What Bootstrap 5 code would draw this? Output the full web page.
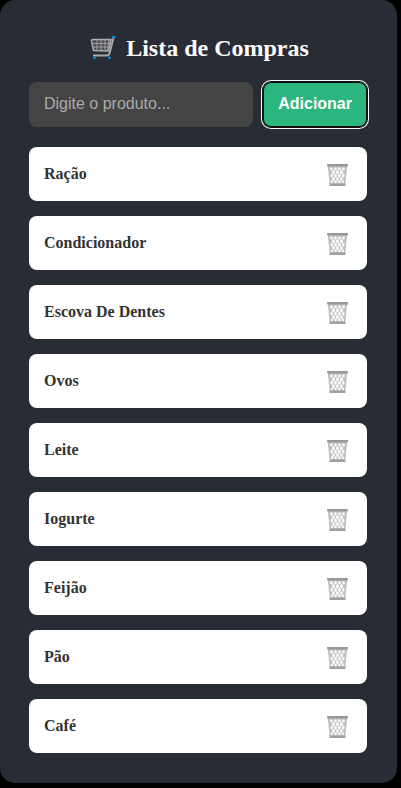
<!DOCTYPE html>
<html lang="pt-BR">
<head>
<meta charset="utf-8">
<meta name="viewport" content="width=device-width, initial-scale=1">
<title>Lista de Compras</title>
<link href="https://cdn.jsdelivr.net/npm/bootstrap@5.3.0/dist/css/bootstrap.min.css" rel="stylesheet">
<style>
body { background: #000; font-family: "Liberation Serif", "Times New Roman", serif; }
.shop-panel { background: #282c35; border-radius: 15px; margin: 0 4px 5px 0; padding: 29px 30px 30px 29px; }
.shop-title { font-size: 24px; line-height: 38px; color: #fff; gap: 10px; padding-left: 3px; }
.shop-form { gap: 10px; margin-top: 15px; }
.shop-input, .shop-add { height: 45px; border-radius: 8px; font-family: "Liberation Sans", Arial, sans-serif; font-size: 16px; }
.shop-input, .shop-input:focus { background: #444; color: #fff; padding: 0 15px 2px; }
.shop-input::placeholder { color: #aaa; }
.shop-add, .shop-add:hover { background: #2cb67d; color: #fff; padding: 0 15px 2px; box-shadow: inset 0 0 0 1px #101010, 0 0 0 1px #101010, 0 0 0 2px #fff; }
.shop-items { gap: 15px; margin-top: 20px; }
.shop-item { background: #fff; color: #333; border-radius: 8px; height: 54px; padding: 0 15px; font-size: 16px; }
.shop-remove { padding: 2px 3px 0; line-height: 1; }
</style>
</head>
<body>
<svg class="d-none" aria-hidden="true">
  <symbol id="bin" viewBox="0 0 24 26">
    <path d="M2.800 4h19.400l-2 19H4.800z" fill="#c0c0c0"/>
    <g fill="#fff">
      <ellipse cx="6.500" cy="6.800" rx="1.300" ry="1.600"/><ellipse cx="10.500" cy="6.800" rx="1.300" ry="1.600"/><ellipse cx="14.500" cy="6.800" rx="1.300" ry="1.600"/><ellipse cx="18.500" cy="6.800" rx="1.300" ry="1.600"/>
      <ellipse cx="8.500" cy="10.300" rx="1.400" ry="2"/><ellipse cx="12.500" cy="10.300" rx="1.400" ry="2"/><ellipse cx="16.500" cy="10.300" rx="1.400" ry="2"/>
      <ellipse cx="6.700" cy="13.700" rx="1.200" ry="1.900"/><ellipse cx="10.500" cy="13.700" rx="1.400" ry="2"/><ellipse cx="14.500" cy="13.700" rx="1.400" ry="2"/><ellipse cx="18.300" cy="13.700" rx="1.200" ry="1.900"/>
      <ellipse cx="8.600" cy="17.100" rx="1.300" ry="1.900"/><ellipse cx="12.500" cy="17.100" rx="1.400" ry="1.900"/><ellipse cx="16.400" cy="17.100" rx="1.300" ry="1.900"/>
      <ellipse cx="7" cy="20" rx="1" ry="1.400"/><ellipse cx="10.600" cy="20" rx="1.200" ry="1.400"/><ellipse cx="14.400" cy="20" rx="1.200" ry="1.400"/><ellipse cx="18" cy="20" rx="1" ry="1.400"/>
    </g>
    <path d="M2 2h21l-.3 2.500H2.300z" fill="#999"/>
    <path d="M4.500 21.500h16v2.500h-16z" fill="#a0a0a0"/>
  </symbol>
</svg>
<main class="shop-panel">
  <h1 class="shop-title d-flex justify-content-center align-items-center fw-bold mb-0">
    <svg width="26" height="26" viewBox="0 0 26 26" fill="none" aria-hidden="true">
      <path d="M2 5h19l-2 11-15-1z" fill="#4c5056"/>
      <path d="M2.500 8.500h18M3 12h17M7 5v10.500M11 5v10.500M15 5v10.500M19 5l-1.500 11" stroke="#9b9b9b" stroke-width="1"/>
      <path d="M2.500 4.500h18.500l-2.500 11.500-15-.5-2-9.500q0-1.500 1-1.500z" stroke="#adadad" stroke-width="1.500"/>
      <path d="M23.500 3L19.500 18.500Q19 20.500 17 20.500H3" stroke="#aaa" stroke-width="1.900"/>
      <path d="M22 2h3.500" stroke="#0788cf" stroke-width="2.200"/>
      <circle cx="4.500" cy="22.800" r="1.500" fill="#0788cf"/>
      <circle cx="19.500" cy="22.800" r="1.500" fill="#0788cf"/>
    </svg>
    <span>Lista de Compras</span>
  </h1>
  <form class="shop-form d-flex" onsubmit="return false">
    <input class="shop-input form-control border-0 flex-fill" type="text" placeholder="Digite o produto..." aria-label="Produto">
    <button class="shop-add btn border-0 fw-bold flex-shrink-0" type="submit">Adicionar</button>
  </form>
  <ul class="shop-items list-unstyled d-flex flex-column mb-0">
    <li class="shop-item d-flex justify-content-between align-items-center fw-bold"><span>Ração</span><button class="shop-remove btn border-0" type="button" aria-label="Remover Ração"><svg width="24" height="26"><use href="#bin"/></svg></button></li>
    <li class="shop-item d-flex justify-content-between align-items-center fw-bold"><span>Condicionador</span><button class="shop-remove btn border-0" type="button" aria-label="Remover Condicionador"><svg width="24" height="26"><use href="#bin"/></svg></button></li>
    <li class="shop-item d-flex justify-content-between align-items-center fw-bold"><span>Escova De Dentes</span><button class="shop-remove btn border-0" type="button" aria-label="Remover Escova De Dentes"><svg width="24" height="26"><use href="#bin"/></svg></button></li>
    <li class="shop-item d-flex justify-content-between align-items-center fw-bold"><span>Ovos</span><button class="shop-remove btn border-0" type="button" aria-label="Remover Ovos"><svg width="24" height="26"><use href="#bin"/></svg></button></li>
    <li class="shop-item d-flex justify-content-between align-items-center fw-bold"><span>Leite</span><button class="shop-remove btn border-0" type="button" aria-label="Remover Leite"><svg width="24" height="26"><use href="#bin"/></svg></button></li>
    <li class="shop-item d-flex justify-content-between align-items-center fw-bold"><span>Iogurte</span><button class="shop-remove btn border-0" type="button" aria-label="Remover Iogurte"><svg width="24" height="26"><use href="#bin"/></svg></button></li>
    <li class="shop-item d-flex justify-content-between align-items-center fw-bold"><span>Feijão</span><button class="shop-remove btn border-0" type="button" aria-label="Remover Feijão"><svg width="24" height="26"><use href="#bin"/></svg></button></li>
    <li class="shop-item d-flex justify-content-between align-items-center fw-bold"><span>Pão</span><button class="shop-remove btn border-0" type="button" aria-label="Remover Pão"><svg width="24" height="26"><use href="#bin"/></svg></button></li>
    <li class="shop-item d-flex justify-content-between align-items-center fw-bold"><span>Café</span><button class="shop-remove btn border-0" type="button" aria-label="Remover Café"><svg width="24" height="26"><use href="#bin"/></svg></button></li>
  </ul>
</main>
<script src="https://cdn.jsdelivr.net/npm/bootstrap@5.3.0/dist/js/bootstrap.bundle.min.js"></script>
</body>
</html>
